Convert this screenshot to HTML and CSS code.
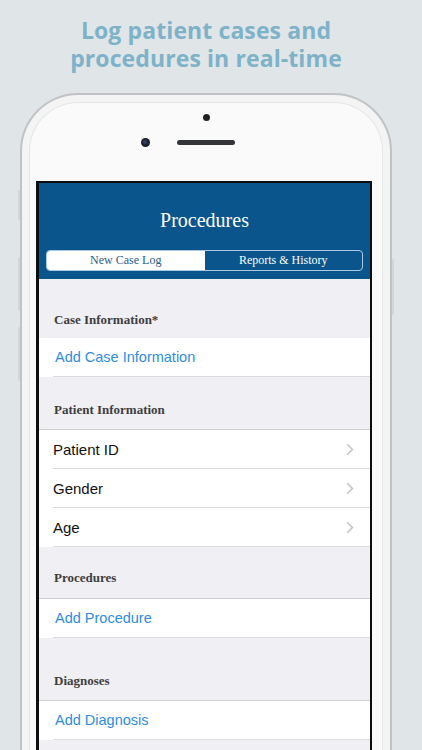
FILE: index.html
```html
<!DOCTYPE html>
<html lang="en">
<head>
<meta charset="utf-8">
<title>Procedures</title>
<link rel="stylesheet" href="styles.css">
</head>
<body>
<div class="page">
  <h1 class="headline"><span class="hl-line">Log patient cases and</span><span class="hl-line">procedures in real-time</span></h1>
  <div class="phone">
    <span class="btn btn-mute"></span>
    <span class="btn btn-volup"></span>
    <span class="btn btn-voldown"></span>
    <span class="btn btn-power"></span>
    <div class="bezel">
      <span class="sensor"></span>
      <div class="cam-row">
        <span class="camera"></span>
        <span class="speaker"></span>
        <span class="cam-spacer"></span>
      </div>
    </div>
    <div class="screen">
      <div class="navbar">
        <div class="nav-title">Procedures</div>
        <div class="segmented">
          <div class="seg seg-active">New Case Log</div>
          <div class="seg">Reports &amp; History</div>
        </div>
      </div>
      <div class="content">
        <div class="sec-head sec-h1">Case Information*</div>
        <div class="group">
          <div class="row"><div class="row-in link">Add Case Information</div></div>
        </div>

        <div class="sec-head sec-h2">Patient Information</div>
        <div class="group bordered">
          <div class="row"><div class="row-in"><span>Patient ID</span><svg class="chev" viewBox="0 0 8 13" width="8" height="13"><path d="M1.2 1.2 L6.4 6.5 L1.2 11.8" /></svg></div></div>
          <div class="row"><div class="row-in"><span>Gender</span><svg class="chev" viewBox="0 0 8 13" width="8" height="13"><path d="M1.2 1.2 L6.4 6.5 L1.2 11.8" /></svg></div></div>
          <div class="row"><div class="row-in"><span>Age</span><svg class="chev" viewBox="0 0 8 13" width="8" height="13"><path d="M1.2 1.2 L6.4 6.5 L1.2 11.8" /></svg></div></div>
        </div>

        <div class="sec-head sec-h3">Procedures</div>
        <div class="group bordered">
          <div class="row"><div class="row-in link">Add Procedure</div></div>
        </div>

        <div class="sec-head sec-h4">Diagnoses</div>
        <div class="group bordered">
          <div class="row"><div class="row-in link">Add Diagnosis</div></div>
        </div>
      </div>
    </div>
  </div>
</div>
</body>
</html>
```

FILE: styles.css
```css
html, body {
  margin: 0;
  padding: 0;
  height: 750px;
  overflow: hidden;
  background: #e0e5e8;
}

.page {
  width: 412px;
}

.headline {
  margin: 0;
  padding-top: 16px;
  text-align: center;
  font-family: "Open Sans", "Liberation Sans", sans-serif;
  font-weight: 700;
  font-size: 23px;
  color: #7db2c9;
  letter-spacing: 0.1px;
}

.hl-line {
  display: block;
  height: 28px;
  line-height: 28px;
}

.phone {
  position: relative;
  margin: 21px 0 0 20px;
  width: 368px;
  height: 720px;
  border: 2px solid #c0c3c6;
  border-bottom: none;
  border-radius: 58px 58px 0 0;
  background: #fafafa;
  box-shadow: inset 0 0 0 7px #f4f4f4, inset 0 0 0 8px #e5e6e7;
}

.btn {
  position: absolute;
  width: 2px;
  background: #d3d6d8;
  border-radius: 1px;
}
.btn-mute { left: -4px; top: 95px; height: 30px; }
.btn-volup { left: -4px; top: 162px; height: 54px; }
.btn-voldown { left: -4px; top: 232px; height: 54px; }
.btn-power { right: -4px; top: 164px; height: 56px; }

.bezel {
  height: 86px;
  display: flex;
  flex-direction: column;
  align-items: center;
  box-sizing: border-box;
}

.sensor {
  margin-top: 19px;
  width: 7px;
  height: 7px;
  border-radius: 50%;
  background: #222;
}

.cam-row {
  margin-top: 17px;
  display: flex;
  align-items: center;
  gap: 27px;
}

.camera {
  width: 9px;
  height: 9px;
  border-radius: 50%;
  background: radial-gradient(circle at 45% 45%, #3b4a6e 0, #1b2030 45%, #0f1116 100%);
}

.speaker {
  width: 58px;
  height: 5px;
  border-radius: 3px;
  background: #333538;
}

.cam-spacer {
  width: 9px;
  height: 1px;
}

.screen {
  margin-left: 14px;
  width: 331px;
  border: 2px solid #0e0e0e;
  border-left-width: 3px;
  border-bottom: none;
  background: #efeff4;
  height: 640px;
}

.navbar {
  background: #0a558b;
  height: 96px;
  padding-top: 25px;
  box-sizing: border-box;
}

.nav-title {
  text-align: center;
  font-family: "Liberation Serif", serif;
  font-size: 20px;
  line-height: 24px;
  color: #fff;
}

.segmented {
  margin: 18px 7px 0 7px;
  height: 21px;
  box-sizing: border-box;
  border: 1px solid #a8c9e3;
  border-radius: 4px;
  display: flex;
  overflow: hidden;
}

.seg {
  flex: 1;
  display: flex;
  align-items: center;
  justify-content: center;
  font-family: "Liberation Serif", serif;
  font-size: 12px;
  color: #fff;
}

.seg-active {
  background: #fff;
  color: #1f5c8b;
}

.content {
  background: #efeff4;
}

.sec-head {
  display: flex;
  align-items: flex-end;
  box-sizing: border-box;
  padding: 0 0 11px 15px;
  font-family: "Liberation Serif", serif;
  font-weight: 700;
  font-size: 13px;
  line-height: 16px;
  color: #3e3e40;
}
.sec-h1 { height: 59px; padding-bottom: 10px; }
.sec-h2 { height: 52px; }
.sec-h3 { height: 51px; padding-bottom: 12px; }
.sec-h4 { height: 62px; }

.group {
  background: #fff;
}
.group.bordered {
  border-top: 1px solid #cfcfd3;
}

.row {
  height: 39px;
  padding-left: 14px;
  display: flex;
}

.row-in {
  flex: 1;
  display: flex;
  align-items: center;
  justify-content: space-between;
  border-bottom: 1px solid #dcdce0;
  padding-right: 16px;
  font-family: "Liberation Sans", Arial, sans-serif;
  font-size: 15px;
  color: #111;
}

.row-in.link {
  color: #2e8de3;
  font-size: 14.5px;
  padding-left: 2px;
}

.chev {
  display: block;
  fill: none;
  stroke: #c4c4ca;
  stroke-width: 1.6;
}
```
